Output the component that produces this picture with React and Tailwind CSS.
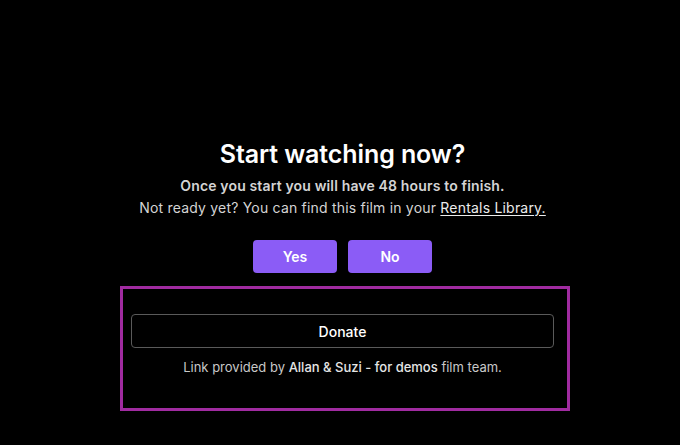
export default function App() {
  return (
    <div className="flex h-[445px] w-full flex-col items-center bg-black pl-[5px] font-['Inter',sans-serif] text-white">
      <h1 className="mt-[138px] text-[25px] font-semibold leading-[32px] tracking-[-0.1px]">Start watching now?</h1>
      <p className="mt-[6px] text-[14px] font-semibold leading-[20px] tracking-[0.15px] text-[#d4d4d4]">
        Once you start you will have 48 hours to finish.
      </p>
      <p className="mt-[2px] text-[14px] leading-[20px] tracking-[0.2px] text-[#d4d4d4]">
        Not ready yet? You can find this film in your{' '}
        <a href="#" className="text-[#ececec] underline underline-offset-2">
          Rentals Library.
        </a>
      </p>
      <div className="mt-[22px] flex gap-[11px]">
        <button className="h-[33px] w-[84px] rounded-[4px] bg-[#8b5cf6] text-[14px] font-semibold text-white">Yes</button>
        <button className="h-[33px] w-[84px] rounded-[4px] bg-[#8b5cf6] text-[14px] font-semibold text-white">No</button>
      </div>
      <div className="ml-[5px] mt-[13px] flex h-[125px] w-[450px] flex-col items-center border-[3px] border-[#a02ba0] pl-[8px] pr-[13px] pt-[25px]">
        <button className="h-[34px] w-full rounded-[4px] border border-[#5a5a5a] text-[14px] font-medium text-white">Donate</button>
        <p className="mt-[9px] text-[13px] leading-[20px] text-[#c8c8c8]">
          Link provided by <span className="font-medium text-[#e5e5e5]">Allan &amp; Suzi - for demos</span> film team.
        </p>
      </div>
    </div>
  )
}
